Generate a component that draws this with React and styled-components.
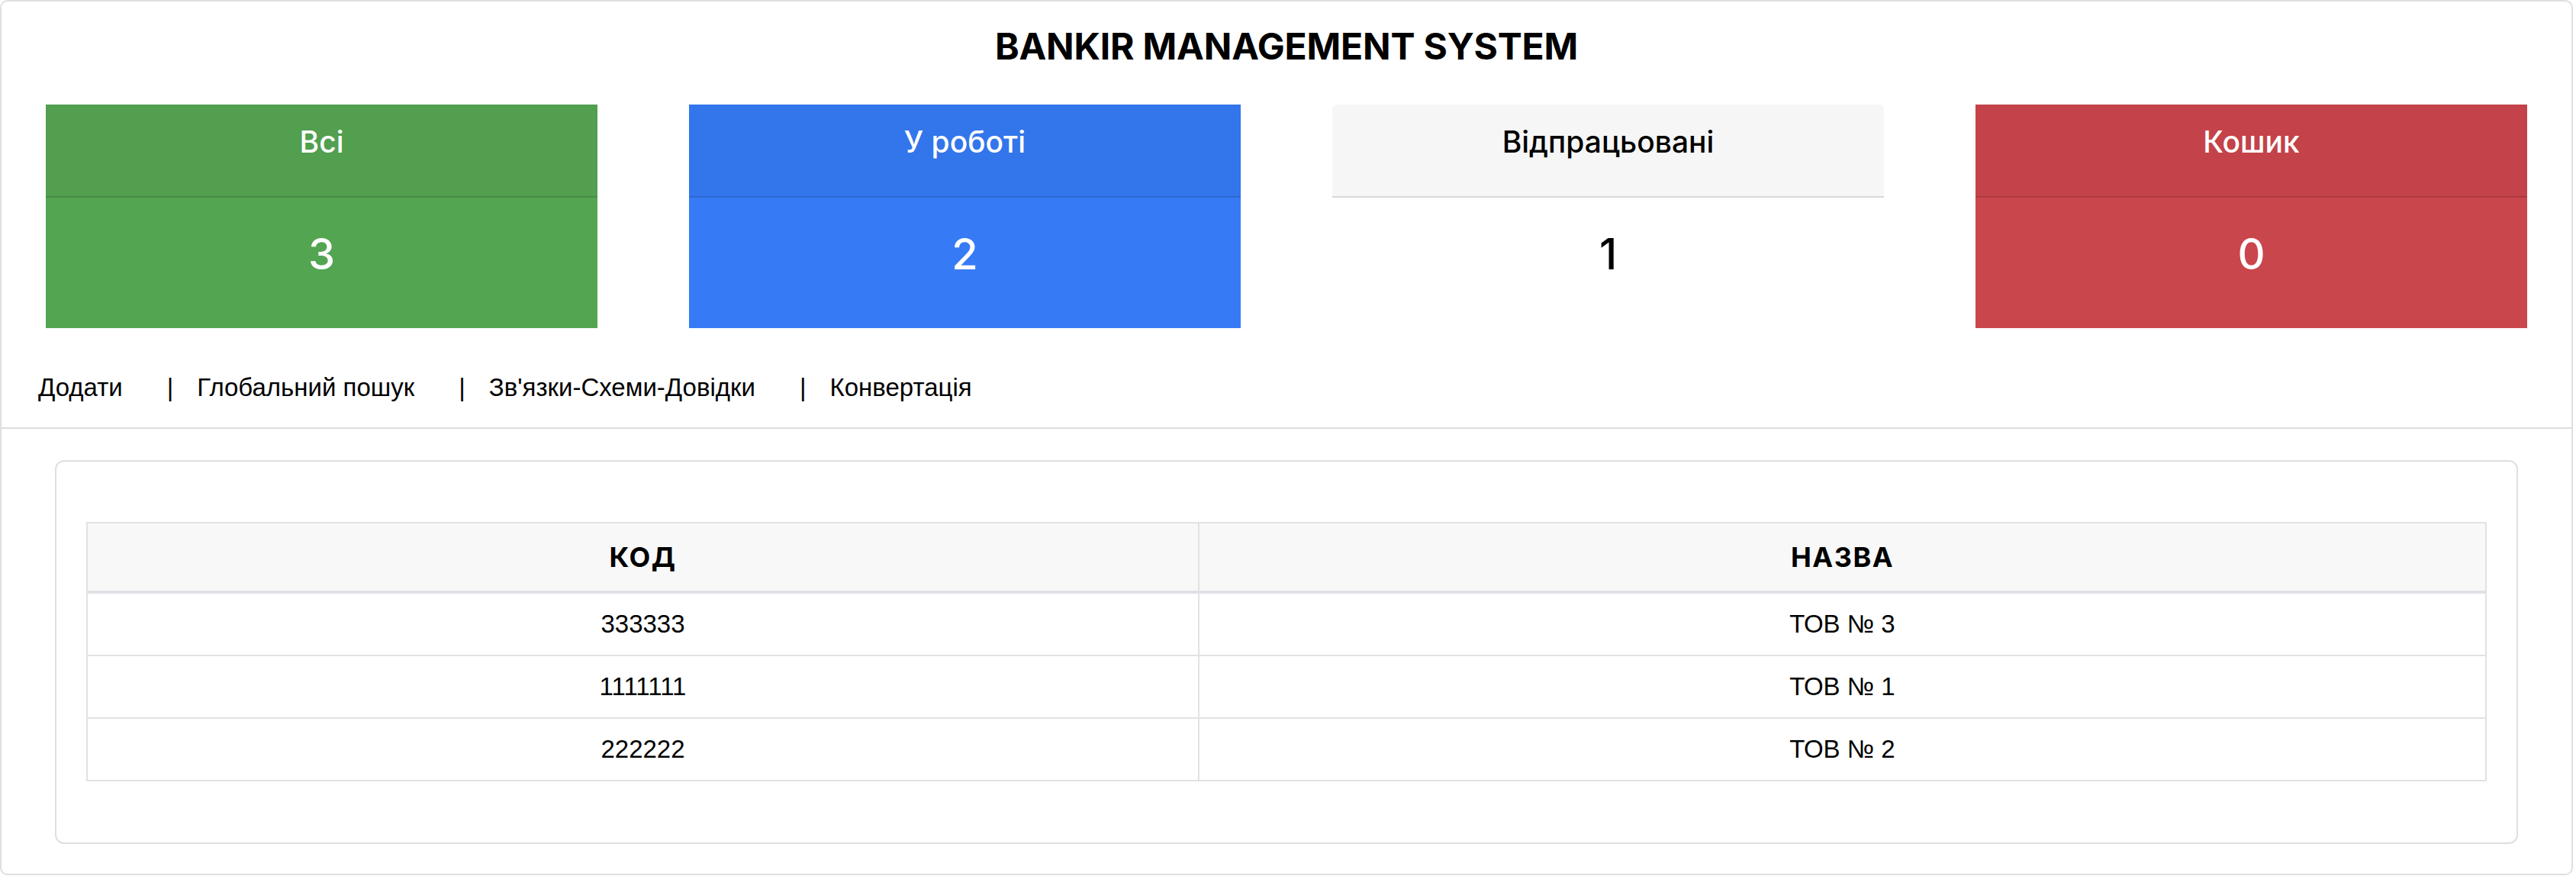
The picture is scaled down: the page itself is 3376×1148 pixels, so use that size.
import React from 'react';
import styled, { createGlobalStyle } from 'styled-components';

const GlobalStyle = createGlobalStyle`
  body {
    margin: 0;
    background: #fff;
    color: #000;
    font-family: "Liberation Sans", Arial, sans-serif;
  }
`;

const Page = styled.div`
  margin-right: 4px;
  border: 2px solid #dfdfdf;
  border-radius: 10px;
  background: #fff;
`;

const Title = styled.h1`
  margin: 0;
  padding-top: 30px;
  font-family: Inter, "Liberation Sans", sans-serif;
  font-size: 48px;
  font-weight: 700;
  letter-spacing: -0.2px;
  line-height: 57.6px;
  text-align: center;
  color: #000;
`;

const StatsRow = styled.div`
  display: flex;
  gap: 120px;
  padding: 0 58px;
  margin-top: 47px;
`;

const themes = {
  green: { head: '#519f4f', body: '#54a552', line: '#478c45', text: '#fff' },
  blue: { head: '#3375eb', body: '#377af5', line: '#2e68d2', text: '#fff' },
  light: { head: '#f6f6f6', body: '#fff', line: '#d9d9d9', text: '#000' },
  red: { head: '#c4424a', body: '#ca464d', line: '#ad3a41', text: '#fff' },
};

const StatCard = styled.div`
  flex: 1;
  display: flex;
  flex-direction: column;
  font-family: Inter, "Liberation Sans", sans-serif;
  color: ${p => themes[p.$tone].text};
  border-radius: ${p => (p.$tone === 'light' ? '6px 6px 0 0' : '0')};
  overflow: hidden;
`;

const StatHead = styled.div`
  height: 122px;
  padding-top: 25px;
  box-sizing: border-box;
  background: ${p => themes[p.$tone].head};
  border-bottom: 2px solid ${p => themes[p.$tone].line};
  text-align: center;
  font-size: 39px;
  font-weight: 500;
  line-height: 48px;
`;

const StatBody = styled.div`
  height: 171px;
  box-sizing: border-box;
  padding-top: 41px;
  background: ${p => themes[p.$tone].body};
  text-align: center;
  font-size: 56px;
  font-weight: 500;
  line-height: 67.2px;
`;

const Nav = styled.div`
  display: flex;
  align-items: center;
  margin-top: 59px;
  padding: 0 0 34px 48px;
  border-bottom: 2px solid #dcdcdc;
  font-size: 33px;
  line-height: 37px;
`;

const NavLink = styled.span`
  margin-right: 58px;
  color: #000;
  cursor: pointer;
`;

const NavSep = styled.span`
  margin-right: 31px;
`;

const Panel = styled.div`
  margin: 41px 70px 39px;
  padding: 79px 39px 80px;
  border: 2px solid #dfdfdf;
  border-radius: 12px;
`;

const Table = styled.table`
  width: 100%;
  border-collapse: collapse;
  table-layout: fixed;
`;

const Th = styled.th`
  padding: 20px;
  background: #f8f8f8;
  border: 2px solid #e2e2e2;
  border-bottom: 4px solid #dee2e6;
  font-family: Inter, "Liberation Sans", sans-serif;
  font-size: 36px;
  font-weight: 700;
  letter-spacing: 1.5px;
  line-height: 48px;
  text-align: center;
`;

const Td = styled.td`
  padding: 16px;
  border: 2px solid #e2e2e2;
  font-size: 33px;
  line-height: 48px;
  text-align: center;
`;

const stats = [
  { tone: 'green', label: 'Всі', value: 3 },
  { tone: 'blue', label: 'У роботі', value: 2 },
  { tone: 'light', label: 'Відпрацьовані', value: 1 },
  { tone: 'red', label: 'Кошик', value: 0 },
];

const links = ['Додати', 'Глобальний пошук', "Зв'язки-Схеми-Довідки", 'Конвертація'];

const rows = [
  { code: '333333', name: 'ТОВ № 3' },
  { code: '1111111', name: 'ТОВ № 1' },
  { code: '222222', name: 'ТОВ № 2' },
];

export default function App() {
  return (
    <>
      <GlobalStyle />
      <Page>
        <Title>BANKIR MANAGEMENT SYSTEM</Title>
        <StatsRow>
          {stats.map(s => (
            <StatCard key={s.label} $tone={s.tone}>
              <StatHead $tone={s.tone}>{s.label}</StatHead>
              <StatBody $tone={s.tone}>{s.value}</StatBody>
            </StatCard>
          ))}
        </StatsRow>
        <Nav>
          {links.map((l, i) => (
            <React.Fragment key={l}>
              {i > 0 && <NavSep>|</NavSep>}
              <NavLink>{l}</NavLink>
            </React.Fragment>
          ))}
        </Nav>
        <Panel>
          <Table>
            <colgroup>
              <col style={{ width: '1457px' }} />
              <col />
            </colgroup>
            <thead>
              <tr>
                <Th>КОД</Th>
                <Th>НАЗВА</Th>
              </tr>
            </thead>
            <tbody>
              {rows.map(r => (
                <tr key={r.code}>
                  <Td>{r.code}</Td>
                  <Td>{r.name}</Td>
                </tr>
              ))}
            </tbody>
          </Table>
        </Panel>
      </Page>
    </>
  );
}
